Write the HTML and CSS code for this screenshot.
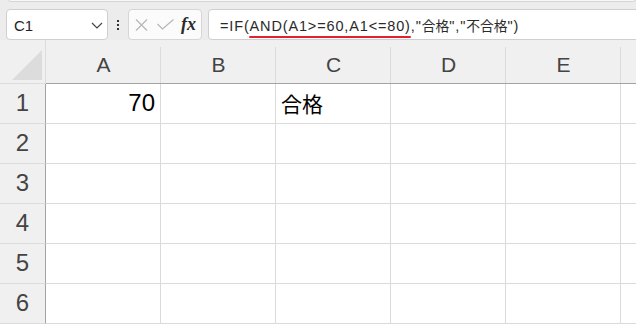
FILE: index.html
```html
<!DOCTYPE html>
<html lang="ja">
<head>
<meta charset="utf-8">
<title>Excel</title>
<link rel="stylesheet" href="styles.css">
</head>
<body>
<div class="app">
  <div class="topbar">
    <div class="ribbon-edge"></div>
    <div class="fbar">
      <div class="namebox">
        <span class="name">C1</span>
        <svg class="chev" width="12" height="7" viewBox="0 0 12 7"><polyline points="1,1 6,6 11,1" fill="none" stroke="#444" stroke-width="1.2"/></svg>
      </div>
      <div class="vdots"><i></i><i></i><i></i></div>
      <div class="fxbox">
        <svg width="13" height="12" viewBox="0 0 13 12"><path d="M1 0.5 L12 11.5 M12 0.5 L1 11.5" stroke="#b5b5b5" stroke-width="1.1" fill="none"/></svg>
        <svg width="17" height="11" viewBox="0 0 17 11"><polyline points="0.5,5 5.5,10 16.5,0.5" stroke="#b5b5b5" stroke-width="1.1" fill="none"/></svg>
        <span class="fx">fx</span>
      </div>
      <div class="formula">
        <span class="ftext">=IF(<span class="mark">AND(A1&gt;=60,A1&lt;=80)</span>,"<span class="jp">合格</span>","<span class="jp">不合格</span>")</span>
      </div>
    </div>
  </div>
  <div class="grid">
    <div class="hrow">
      <div class="corner"><div class="tri"></div></div>
      <div class="ch">A</div>
      <div class="ch">B</div>
      <div class="ch">C</div>
      <div class="ch">D</div>
      <div class="ch">E</div>
      <div class="ch last"></div>
    </div>
    <div class="row">
      <div class="rh">1</div>
      <div class="cell num">70</div>
      <div class="cell"></div>
      <div class="cell txt">合格</div>
      <div class="cell"></div>
      <div class="cell"></div>
      <div class="cell last"></div>
    </div>
    <div class="row">
      <div class="rh">2</div>
      <div class="cell"></div><div class="cell"></div><div class="cell"></div><div class="cell"></div><div class="cell"></div><div class="cell last"></div>
    </div>
    <div class="row">
      <div class="rh">3</div>
      <div class="cell"></div><div class="cell"></div><div class="cell"></div><div class="cell"></div><div class="cell"></div><div class="cell last"></div>
    </div>
    <div class="row">
      <div class="rh">4</div>
      <div class="cell"></div><div class="cell"></div><div class="cell"></div><div class="cell"></div><div class="cell"></div><div class="cell last"></div>
    </div>
    <div class="row">
      <div class="rh">5</div>
      <div class="cell"></div><div class="cell"></div><div class="cell"></div><div class="cell"></div><div class="cell"></div><div class="cell last"></div>
    </div>
    <div class="row">
      <div class="rh">6</div>
      <div class="cell"></div><div class="cell"></div><div class="cell"></div><div class="cell"></div><div class="cell"></div><div class="cell last"></div>
    </div>
  </div>
</div>
</body>
</html>
```
FILE: styles.css
```css
html, body {
  margin: 0;
  padding: 0;
  background: #efefef;
  overflow: hidden;
}
.app {
  width: 636px;
  height: 324px;
  overflow: hidden;
  font-family: "Liberation Sans", "Noto Sans CJK JP", sans-serif;
}
.topbar {
  height: 40px;
  background: #ececec;
  display: flex;
  flex-direction: column;
}
.ribbon-edge {
  height: 2px;
  margin-left: 8px;
  background: #f7f7f7;
  border: 1px solid #d6d6d6;
  border-top: none;
  border-radius: 0 0 5px 5px;
  margin-top: -1px;
}
.fbar {
  display: flex;
  margin-top: 7px;
  height: 31px;
}
.namebox {
  margin-left: 6px;
  width: 102px;
  box-sizing: border-box;
  height: 31px;
  background: #fff;
  border: 1px solid #cfcfcf;
  border-radius: 4px;
  display: flex;
  align-items: center;
  justify-content: space-between;
  padding: 0 4px 0 7px;
}
.name {
  font-size: 15px;
  color: #222;
  padding-top: 1px;
}
.chev {
  margin-top: 2px;
}
.vdots {
  width: 20px;
  display: flex;
  flex-direction: column;
  align-items: center;
  justify-content: center;
  gap: 2px;
  padding-right: 1px;
  box-sizing: border-box;
}
.vdots i {
  display: block;
  width: 2px;
  height: 2px;
  background: #333;
}
.fxbox {
  width: 74px;
  box-sizing: border-box;
  height: 31px;
  background: #fbfbfb;
  border: 1px solid #d6d6d6;
  border-radius: 4px;
  display: flex;
  align-items: center;
  padding-left: 6px;
  gap: 9px;
}
.fx {
  font-family: "Liberation Serif", serif;
  font-style: italic;
  font-weight: bold;
  font-size: 18px;
  color: #2a2a2a;
  margin-left: -2px;
}
.formula {
  margin-left: 6px;
  flex: 1;
  margin-right: -12px;
  box-sizing: border-box;
  height: 31px;
  background: #fff;
  border: 1px solid #cfcfcf;
  border-radius: 4px;
  display: flex;
  align-items: center;
  padding-left: 11px;
}
.ftext {
  font-size: 14.5px;
  letter-spacing: 0.85px;
  color: #2a2a2a;
  white-space: nowrap;
  padding-top: 1px;
}
.jp {
  font-size: 13.8px;
  letter-spacing: 0;
}
.mark {
  position: relative;
}
.mark::after {
  content: "";
  position: absolute;
  left: -1px;
  right: 0;
  bottom: -4px;
  height: 2.5px;
  border-radius: 2px;
  background: #e3202b;
}
.grid {
  background: #fff;
}
.hrow, .row {
  display: flex;
}
.corner, .ch, .rh, .cell {
  flex: none;
  box-sizing: border-box;
}
.hrow {
  height: 44px;
  background: #f0f0f0;
}
.corner {
  width: 46px;
  height: 44px;
  border-right: 1px solid #dcdcdc;
  border-bottom: 1px solid #dcdcdc;
  display: flex;
  justify-content: flex-end;
  align-items: flex-end;
  padding: 0 3px 3px 0;
}
.tri {
  width: 30px;
  height: 30px;
  background: #dcdcdc;
  clip-path: polygon(100% 0, 100% 100%, 0 100%);
}
.ch {
  width: 115px;
  height: 44px;
  border-bottom: 1px solid #a3a3a3;
  background: linear-gradient(#dcdcdc, #dcdcdc) right bottom / 1px 36px no-repeat;
  display: flex;
  justify-content: center;
  align-items: flex-end;
  padding-bottom: 8px;
  font-size: 21px;
  color: #444;
  line-height: 1;
}
.ch.last, .cell.last {
  width: 30px;
}
.row {
  height: 40px;
}
.rh {
  width: 46px;
  height: 40px;
  background: #f0f0f0;
  border-right: 1px solid #a3a3a3;
  border-bottom: 1px solid #dcdcdc;
  display: flex;
  justify-content: center;
  align-items: center;
  font-size: 24px;
  color: #444;
  padding-bottom: 1px;
}
.cell {
  width: 115px;
  height: 40px;
  border-right: 1px solid #dadada;
  border-bottom: 1px solid #dadada;
  display: flex;
  align-items: center;
  font-size: 24px;
  color: #000;
  padding: 0 5px 1px;
}
.cell.num {
  justify-content: flex-end;
}
.cell.txt {
  font-size: 21px;
  padding-left: 5px;
}
```
